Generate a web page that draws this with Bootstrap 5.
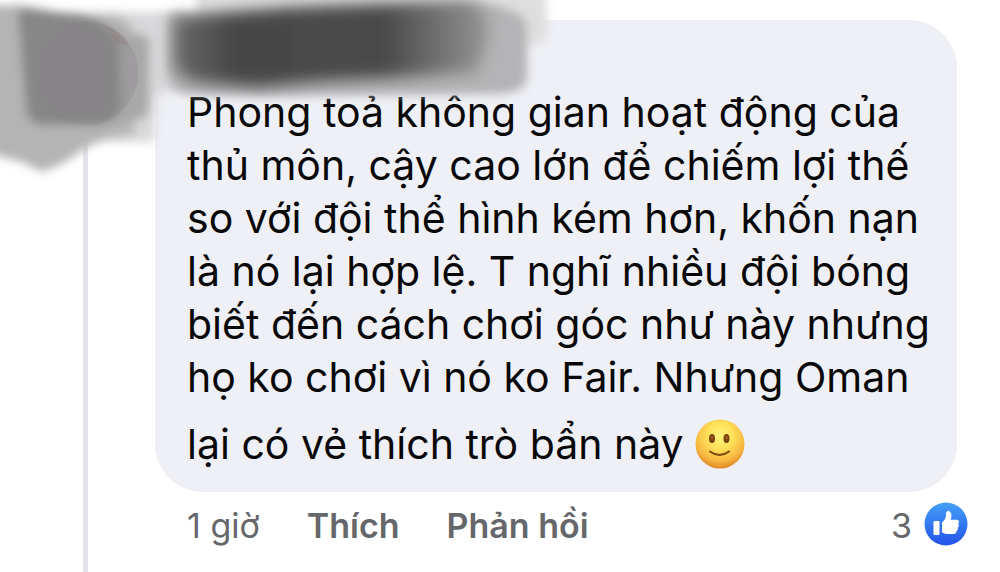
<!DOCTYPE html>
<html lang="vi">
<head>
<meta charset="utf-8">
<meta name="viewport" content="width=device-width, initial-scale=1">
<title>Bình luận</title>
<link href="https://cdn.jsdelivr.net/npm/bootstrap@5.3.0/dist/css/bootstrap.min.css" rel="stylesheet">
<style>
  body { font-family: Inter, "Noto Sans", sans-serif; background: #fff; color: #080809; }
  .thread { min-height: 100vh; overflow: hidden; }
  .rail { width: 155px; padding: 136px 0 0 83px; }
  .rail-line { width: 5px; background: #e3e4ea; }
  .comment-col { min-width: 0; padding: 20px 32px 0 0; }
  .bubble { background: #eff0f5; border-radius: 48px; padding: 66px 0 8px 32px; margin-right: 11px; }
  .comment-text { font-size: 41px; line-height: 53px; white-space: nowrap; }
  .last-line { line-height: 80px; }
  .emoji { width: 50px; height: 50px; }
  .meta { padding: 10px 0 0 32px; font-size: 34px; line-height: 48px; color: #65676b; }
  .meta button { color: inherit; font-size: 34px; line-height: 48px; font-weight: 600; }
  .acts { gap: 47px; }
  .likes { gap: 12px; }
  .like-icon { width: 44px; height: 44px; margin-bottom: 4px; }
  .smudge { width: 570px; height: 190px; pointer-events: none; }
</style>
</head>
<body>
<main class="thread d-flex position-relative">
  <div class="rail d-flex flex-shrink-0"><div class="rail-line"></div></div>
  <div class="comment-col flex-grow-1">
    <article class="bubble">
      <p class="comment-text mb-0">Phong toả không gian hoạt động của<br>thủ môn, cậy cao lớn để chiếm lợi thế<br>so với đội thể hình kém hơn, khốn nạn<br>là nó lại hợp lệ. T nghĩ nhiều đội bóng<br>biết đến cách chơi góc như này nhưng<br>họ ko chơi vì nó ko Fair. Nhưng Oman</p>
      <p class="comment-text last-line mb-0 d-flex align-items-center">lại có vẻ thích trò bẩn này&nbsp;<svg class="emoji" viewBox="0 0 50 50" role="img" aria-label="Mặt cười">
        <defs>
          <radialGradient id="face" cx=".5" cy=".34" r=".66"><stop offset="0" stop-color="#fff47c"/><stop offset=".4" stop-color="#ffe05a"/><stop offset=".75" stop-color="#f8ba42"/><stop offset="1" stop-color="#dd8726"/></radialGradient>
        </defs>
        <circle cx="25" cy="25" r="24.500" fill="url(#face)"/>
        <ellipse cx="17" cy="19.500" rx="3" ry="4.500" fill="#783f08"/>
        <ellipse cx="31.500" cy="19.500" rx="3" ry="4.500" fill="#783f08"/>
        <ellipse cx="17" cy="18.500" rx="1.200" ry="1.800" fill="#a3661f"/>
        <ellipse cx="31.500" cy="18.500" rx="1.200" ry="1.800" fill="#a3661f"/>
        <path d="M15 32.500Q24.500 39.500 34 32.500" fill="none" stroke="#7a430c" stroke-width="2" stroke-linecap="round"/>
      </svg></p>
    </article>
    <footer class="meta d-flex justify-content-between align-items-center">
      <div class="acts d-flex align-items-center">
        <span>1 giờ</span>
        <button type="button" class="btn p-0 border-0">Thích</button>
        <button type="button" class="btn p-0 border-0">Phản hồi</button>
      </div>
      <div class="likes d-flex align-items-center">
        <span>3</span>
        <svg class="like-icon" viewBox="0 0 44 44" role="img" aria-label="Thích">
          <defs><linearGradient id="blue" x1="0" y1="0" x2="0" y2="1"><stop offset="0" stop-color="#44a0f7"/><stop offset="1" stop-color="#2453ea"/></linearGradient></defs>
          <circle cx="22" cy="22" r="21.500" fill="url(#blue)"/>
          <path fill="#fff" d="M10.500 19h4q1 0 1 1v12q0 1-1 1h-4q-1 0-1-1V20q0-1 1-1zM18 20.500c2-2 4-4 4-7 0-3 .5-4.500 2-4.500 2 0 3.500 2 3.500 4.500 0 1.800-.6 3-.8 4.200h6c1.600 0 2.400 1 2.300 2.300 0 .8-.5 1.500-1 1.800.8.600 1 1.300.8 2.100-.1.800-.5 1.400-1.200 1.700.4.700.4 1.300.2 2-.3.800-.8 1.200-1.400 1.400.2 2-.8 3-3 3h-5c-2.500 0-4.300-.5-5.600-1.300-.7-.4-.8-1-.8-1.800z"/>
        </svg>
      </div>
    </footer>
  </div>

  <!-- brush strokes hiding the author's picture and name -->
  <svg class="smudge position-absolute top-0 start-0" viewBox="0 0 570 190" aria-hidden="true">
    <defs>
      <filter id="b5" x="-20%" y="-20%" width="140%" height="140%"><feGaussianBlur stdDeviation="5"/></filter>
      <filter id="b8" x="-20%" y="-40%" width="140%" height="180%"><feGaussianBlur stdDeviation="8"/></filter>
      <linearGradient id="ink" gradientUnits="userSpaceOnUse" x1="170" y1="0" x2="530" y2="0"><stop offset="0" stop-color="#6c6c6c"/><stop offset=".18" stop-color="#464646"/><stop offset=".6" stop-color="#4a4a4a"/><stop offset=".85" stop-color="#8c8c8d"/><stop offset="1" stop-color="#b0b0b2"/></linearGradient>
    </defs>
    <g filter="url(#b5)">
      <path fill="#d8d8da" d="M110 12H185V88L157 94 154 142 110 142z"/>
      <path fill="#b4b4b4" d="M-20 6L22 5 60 12 112 14 130 22 135 134 115 137 90 145 62 164 42 172 22 162-20 151z"/>
      <path fill="#a9a8a9" d="M105 34Q147 28 150 42L149 112Q147 122 110 123z"/>
      <path fill="#888788" d="M18 14Q18 9 26 9L82 15Q108 22 119 38L121 105Q115 124 98 125H40Q27 122 26 108z"/>
    </g>
    <circle cx="86" cy="73" r="52" fill="#858283" opacity=".3"/>
    <path d="M106 26q15 5 23 19l-13-2z" fill="#8d7b78" opacity=".3"/>
    <g filter="url(#b5)">
      <path fill="#dedede" d="M195-20H542Q548 0 547 34 546 45 530 45H200z"/>
      <path fill="#b4b4b6" d="M168 14L490 4Q526 12 527 25V80Q524 93 495 94L260 96 184 94Q167 88 167 68z"/>
    </g>
    <path filter="url(#b8)" fill="url(#ink)" d="M174 18L290 8 470 1Q490 8 488 35L478 72 405 77 320 81 258 87 196 82Q174 76 174 60z"/>
  </svg>
</main>
<script src="https://cdn.jsdelivr.net/npm/bootstrap@5.3.0/dist/js/bootstrap.bundle.min.js"></script>
</body>
</html>
